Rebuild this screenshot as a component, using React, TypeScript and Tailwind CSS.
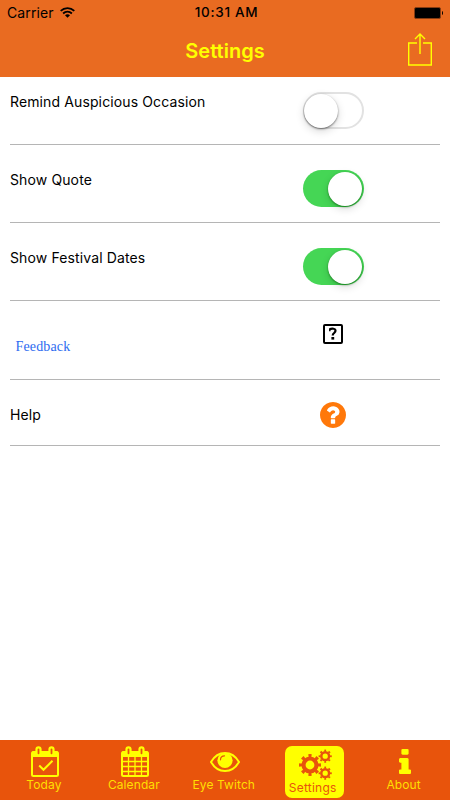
import { useState } from "react"
import type { ReactNode } from "react"

// iOS style toggle
function Toggle({ on, label, onChange }: { on: boolean; label: string; onChange: () => void }) {
  return (
    <button
      type="button"
      role="switch"
      aria-checked={on}
      aria-label={label}
      onClick={onChange}
      className={
        on
          ? "flex h-[37px] w-[61px] items-center justify-end rounded-full bg-[#45d655] pr-[1.5px]"
          : "flex h-[37px] w-[61px] items-center rounded-full border-2 border-[#e2e2e2] bg-white"
      }
    >
      <span
        className={
          on
            ? "size-[34px] rounded-full bg-white shadow-[0_3px_8px_rgba(0,0,0,0.14),0_1px_2px_rgba(0,90,0,0.6)]"
            : "-ml-px size-[34px] rounded-full bg-white shadow-[0_3px_8px_rgba(0,0,0,0.16),0_1px_2px_rgba(0,0,0,0.5)]"
        }
      />
    </button>
  )
}

function CalendarFrame({ children }: { children: ReactNode }) {
  return (
    <svg className="h-[31px] w-[28px]" viewBox="0 0 28 31" fill="none" stroke="currentColor">
      <rect x="1" y="6" width="26" height="24" rx="1.5" strokeWidth="2" />
      <path d="M1 5.5h26v5.5H1z" fill="currentColor" stroke="none" />
      <rect x="5.5" y="1.3" width="4" height="8" rx="2" fill="#e8540c" strokeWidth="2.2" />
      <rect x="18.5" y="1.3" width="4" height="8" rx="2" fill="#e8540c" strokeWidth="2.2" />
      {children}
    </svg>
  )
}

function TodayIcon() {
  return (
    <CalendarFrame>
      <path d="M8.2 19.5l4.3 4.3 9-9" strokeWidth="2" />
    </CalendarFrame>
  )
}

function CalendarIcon() {
  return (
    <CalendarFrame>
      <path d="M2 15.5h24M2 20.5h24M2 25.5h24M7.5 10v20M14 10v20M20.5 10v20" strokeWidth="1.3" />
    </CalendarFrame>
  )
}

function EyeIcon() {
  return (
    <svg className="h-[20px] w-[30px]" viewBox="0 0 30 20" fill="none" stroke="currentColor">
      <path d="M1 10C4.2 4.5 9 1 15 1s10.8 3.5 14 9c-3.2 5.5-8 9-14 9S4.2 15.5 1 10z" strokeWidth="2" strokeLinejoin="round" />
      <circle cx="15" cy="8.3" r="7.6" fill="currentColor" stroke="none" />
      <path d="M10.5 7.8c0-2.3 1.7-4 4-4" stroke="#e8540c" strokeWidth="1.2" strokeLinecap="round" />
    </svg>
  )
}

// One cog: a ring with eight teeth drawn as a dashed outer ring
function Cog({ cx, cy, r }: { cx: number; cy: number; r: number }) {
  return (
    <g>
      <circle cx={cx} cy={cy} r={r * 0.59} strokeWidth={r * 0.38} />
      <circle cx={cx} cy={cy} r={r * 0.86} strokeWidth={r * 0.28} pathLength={16} strokeDasharray="0.85 1.15" strokeDashoffset="0.425" />
    </g>
  )
}

function CogsIcon() {
  return (
    <svg className="h-[31px] w-[33px]" viewBox="0 0 33 31" fill="none" stroke="currentColor">
      <Cog cx={11} cy={16} r={11} />
      <Cog cx={26.2} cy={7.2} r={6.6} />
      <Cog cx={26.2} cy={24.2} r={6.6} />
    </svg>
  )
}

function InfoIcon() {
  return (
    <svg className="h-[25px] w-[12px]" viewBox="0 128 640 1408" preserveAspectRatio="none" fill="currentColor">
      <path d="M640 1344v128q0 26-19 45t-45 19h-512q-26 0-45-19t-19-45v-128q0-26 19-45t45-19h64v-384h-64q-26 0-45-19t-19-45v-128q0-26 19-45t45-19h384q26 0 45 19t19 45v576h64q26 0 45 19t19 45zM512 192v192q0 26-19 45t-45 19h-256q-26 0-45-19t-19-45v-192q0-26 19-45t45-19h256q26 0 45 19t19 45z" />
    </svg>
  )
}

function HelpIcon() {
  return (
    <svg className="size-[26px] text-[#ff780a]" viewBox="128 128 1536 1536" fill="currentColor">
      <path d="M1024 1376v-192q0-14-9-23t-23-9h-192q-14 0-23 9t-9 23v192q0 14 9 23t23 9h192q14 0 23-9t9-23zM1280 704q0-88-55.5-163t-138.5-116-170-41q-243 0-371 213-15 24 8 42l132 100q7 6 19 6 16 0 25-12 53-68 86-92 34-24 86-24 48 0 85.5 26t37.5 59q0 38-20 61t-68 45q-63 28-115.5 86.5t-52.5 125.5v36q0 14 9 23t23 9h192q14 0 23-9t9-23q0-19 21.5-49.5t54.5-49.5q32-18 49-28.5t46-35 44.5-48 28-60.5 12.5-81zM1664 896q0 209-103 385.5t-279.5 279.5-385.5 103-385.5-103-279.5-279.5-103-385.5 103-385.5 279.5-279.5 385.5-103 385.5 103 279.5 279.5 103 385.5z" />
    </svg>
  )
}

function StatusBar() {
  return (
    <div className="flex h-[25px] items-center justify-between pr-[6px] pl-[7px] text-[14px] text-black">
      <div className="flex flex-1 items-center gap-[6px]">
        <span className="tracking-[0.1px]">Carrier</span>
        <svg className="h-[11px] w-[15px]" viewBox="0 0 15 11" fill="none" stroke="currentColor">
          <path d="M.7 3.9C4.6.1 10.4.1 14.3 3.9" strokeWidth="1.8" />
          <path d="M3.1 6.5c2.5-2.4 6.3-2.4 8.8 0" strokeWidth="1.8" />
          <path d="M7.5 10.8L5 8.3c1.4-1.3 3.6-1.3 5 0z" fill="currentColor" stroke="none" />
        </svg>
      </div>
      <span className="pl-[2px] text-[13.5px] font-medium tracking-[0.7px]">10:31 AM</span>
      <div className="flex flex-1 justify-end">
        <svg className="h-[12px] w-[30px]" viewBox="0 0 30 12">
          <rect x=".5" y=".5" width="26" height="11" rx="1.5" fill="#000" stroke="#873c12" />
          <path d="M28 4c1.3.3 1.3 3.7 0 4z" fill="#000" />
        </svg>
      </div>
    </div>
  )
}

const tabs = [
  { name: "Today", icon: <TodayIcon /> },
  { name: "Calendar", icon: <CalendarIcon /> },
  { name: "Eye Twitch", icon: <EyeIcon /> },
  { name: "Settings", icon: <CogsIcon /> },
  { name: "About", icon: <InfoIcon /> },
]

export default function App() {
  const [settings, setSettings] = useState([
    { label: "Remind Auspicious Occasion", on: false },
    { label: "Show Quote", on: true },
    { label: "Show Festival Dates", on: true },
  ])

  const toggle = (index: number) =>
    setSettings(settings.map((s, i) => (i === index ? { ...s, on: !s.on } : s)))

  return (
    <div className="flex h-[800px] w-[450px] flex-col bg-white font-['Inter','Liberation_Sans',sans-serif]">
      {/* Header */}
      <header className="h-[77px] bg-[#e96b21]">
        <StatusBar />
        <div className="flex h-[50px] items-center pr-[18px]">
          <span className="w-[42px]" />
          <h1 className="flex-1 pt-[2px] text-center text-[20px] font-semibold text-[#ffff00]">Settings</h1>
          <button type="button" aria-label="Share" className="pb-[2px]">
            <svg className="h-[33px] w-[24px] text-[#ffff00]" viewBox="0 0 24 33" fill="none" stroke="currentColor" strokeWidth="1.4">
              <path d="M9 10H.7v22h22.6V10H15M12 21V1M7 6l5-5 5 5" />
            </svg>
          </button>
        </div>
      </header>

      {/* Settings list */}
      <main className="flex-1 px-[10px] text-[14px] tracking-[0.12px] text-black">
        {settings.map((s, i) => (
          <div
            key={s.label}
            className={
              i === 0
                ? "flex h-[68px] justify-between border-b border-[#b5b5b5] pt-[15px] pr-[76.5px]"
                : "flex h-[78px] justify-between border-b border-[#b5b5b5] pt-[25px] pr-[76.5px]"
            }
          >
            <span className="leading-[20px]">{s.label}</span>
            <Toggle on={s.on} label={s.label} onChange={() => toggle(i)} />
          </div>
        ))}
        <div className="flex h-[79px] justify-between border-b border-[#b5b5b5] pt-[23px] pr-[97px] pl-[5.5px]">
          <a href="#feedback" className="pt-[13px] font-['Liberation_Serif',serif] text-[14px] leading-[20px] tracking-[0.15px] text-[#2d6cf0]">
            Feedback
          </a>
          <svg className="size-[20px]" viewBox="0 0 20 20" fill="none" stroke="currentColor">
            <rect x="1" y="1" width="18" height="18" rx="1" strokeWidth="2" />
            <path d="M6.8 7.3V4.8" strokeWidth="1.5" />
            <path d="M6.5 5.3c2.5-1 6-.9 6 1.5 0 2.2-2.8 2.2-2.8 4.7" strokeWidth="2.2" />
            <path d="M8.4 13h2.8v2.6H8.4z" fill="currentColor" stroke="none" />
          </svg>
        </div>
        <div className="flex h-[66px] items-center justify-between border-b border-[#b5b5b5] pt-[4px] pr-[94px]">
          <span>Help</span>
          <HelpIcon />
        </div>
      </main>

      {/* Bottom tabs */}
      <nav className="flex h-[60px] bg-[#e8540c] pr-[0.5px] text-[#ffff00]">
        {tabs.map((tab) => (
          <a key={tab.name} href={`#${tab.name}`} className="flex flex-1 justify-center pt-[6px] pr-[2px]">
            {tab.name === "Settings" ? (
              <span className="ml-[2px] flex h-[52px] w-[59px] flex-col items-center rounded-[7px] bg-[#ffff00] pr-[4px] text-[#e8540c]">
                <span className="flex h-[34px] items-end pl-[6px]">{tab.icon}</span>
                <span className="text-[12px] leading-[15px] tracking-[0.25px]">{tab.name}</span>
              </span>
            ) : (
              <span className="flex flex-col items-center">
                <span className="flex h-[31px] items-center pl-[3px]">{tab.icon}</span>
                <span className="text-[12px] leading-[15px] tracking-[0.1px] text-[#ffdf00]">{tab.name}</span>
              </span>
            )}
          </a>
        ))}
      </nav>
    </div>
  )
}
